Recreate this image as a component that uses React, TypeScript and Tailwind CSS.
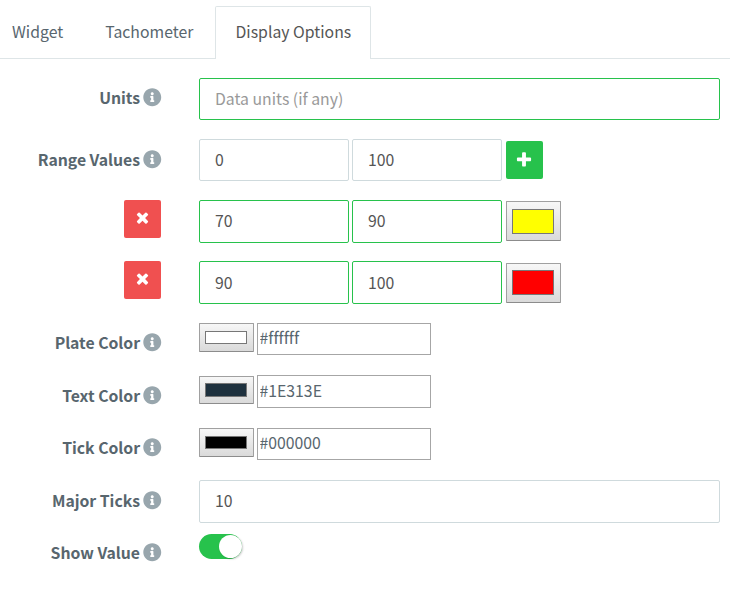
import type { ReactNode } from "react";
import { FaInfoCircle } from "react-icons/fa";

function InfoIcon() {
  return <FaInfoCircle className="size-[18.5px] shrink-0 text-[#98a6ad]" />;
}

function TimesIcon() {
  return (
    <svg className="mr-px mb-[3px] size-[17px] fill-white" viewBox="0 0 1792 1792">
      <path d="M1490 1322q0 40-28 68l-136 136q-28 28-68 28t-68-28l-294-294-294 294q-28 28-68 28t-68-28l-136-136q-28-28-28-68t28-68l294-294-294-294q-28-28-28-68t28-68l136-136q28-28 68-28t68 28l294 294 294-294q28-28 68-28t68 28l136 136q28 28 28 68t-28 68l-294 294 294 294q28 28 28 68z" />
    </svg>
  );
}

function PlusIcon() {
  return (
    <svg className="mr-[0.5px] size-[18px] fill-white" viewBox="0 0 1792 1792">
      <path d="M1600 736v192q0 40-28 68t-68 28h-416v416q0 40-28 68t-68 28h-192q-40 0-68-28t-28-68v-416h-416q-40 0-68-28t-28-68v-192q0-40 28-68t68-28h416v-416q0-40 28-68t68-28h192q40 0 68 28t28 68v416h416q40 0 68 28t28 68z" />
    </svg>
  );
}

function Label({ children }: { children: ReactNode }) {
  return (
    <div className="flex h-[21px] items-center justify-end gap-[3px] font-bold whitespace-nowrap">
      <span className="mt-px leading-[22px] tracking-[-0.03px]">{children}</span>
      <div className="-mr-[0.5px]">
        <InfoIcon />
      </div>
    </div>
  );
}

function Row({ className, label, children }: { className: string; label: ReactNode; children: ReactNode }) {
  return (
    <div className={`grid grid-cols-[161px_521px] items-start gap-x-[38px] ${className}`}>
      {label}
      <div className="flex items-start">{children}</div>
    </div>
  );
}

function RemoveButton() {
  return (
    <button type="button" className="flex h-[38px] w-[37px] items-center justify-center justify-self-end rounded-[2px] bg-[#f05050]">
      <TimesIcon />
    </button>
  );
}

const field = "rounded-[2px] border bg-white pl-[15px] text-[#555] outline-none placeholder:text-[#999] placeholder:opacity-100";

function ColorButton({ className, swatch }: { className: string; swatch: string }) {
  return (
    <button
      type="button"
      className={`w-[55px] rounded-[1px] border border-[#a0a0a0] border-b-[#8c8c8c] bg-linear-to-b from-[#f7f7f7] to-[#dadada] pr-[6px] pl-[5px] ${className}`}
    >
      <span className={`block h-full border border-[#777] ${swatch}`} />
    </button>
  );
}

const hex = "ml-[3px] w-[174px] border border-[#a6a6a6] pl-[1.5px] text-[#58666e] outline-none";

export default function App() {
  return (
    <div className="h-[596px] w-[730px] overflow-hidden bg-white font-['Noto_Sans_CJK_SC',sans-serif] text-[15.8px] text-[#58666e] [font-variant-ligatures:none]">
      <nav className="flex h-[59px] items-end leading-6">
        <div className="flex h-[59px] w-[215px] gap-[42px] border-b border-[#dee5e7] pt-5 pl-3">
          <a>Widget</a>
          <a>Tachometer</a>
        </div>
        <a className="h-[53px] w-[156px] rounded-t-[2px] border border-b-0 border-[#dee5e7] pt-[13px] pl-[19.5px] whitespace-nowrap text-[#555]">
          Display Options
        </a>
        <div className="h-[59px] flex-1 border-b border-[#dee5e7]" />
      </nav>

      <form className="flex flex-col">
        <Row className="mt-[19px] h-[61px]" label={<div className="pt-[9px]"><Label>Units</Label></div>}>
          <input className={`${field} h-[42px] w-full border-[#27c24c] pb-[2px]`} placeholder="Data units (if any)" />
        </Row>
        <Row className="h-[61px]" label={<div className="pt-[10px]"><Label>Range Values</Label></div>}>
          <input className={`${field} h-[42px] w-[150px] border-[#cfdadd] pb-[2px]`} defaultValue="0" />
          <input className={`${field} ml-[3px] h-[42px] w-[150px] border-[#cfdadd] pb-[2px]`} defaultValue="100" />
          <button type="button" className="mt-[2px] ml-1 flex h-[38px] w-[37px] items-center justify-center rounded-[2px] bg-[#27c24c]">
            <PlusIcon />
          </button>
        </Row>
        <Row className="h-[61px]" label={<RemoveButton />}>
          <input className={`${field} h-[43px] w-[150px] border-[#27c24c] pb-[2px]`} defaultValue="70" />
          <input className={`${field} ml-[3px] h-[43px] w-[150px] border-[#27c24c] pb-[2px]`} defaultValue="90" />
          <ColorButton className="mt-px ml-1 h-10 pt-[7px] pb-[6px]" swatch="bg-[#ffff00]" />
        </Row>
        <Row className="h-[62px]" label={<RemoveButton />}>
          <input className={`${field} h-[43px] w-[150px] border-[#27c24c]`} defaultValue="90" />
          <input className={`${field} ml-[3px] h-[43px] w-[150px] border-[#27c24c]`} defaultValue="100" />
          <ColorButton className="mt-[2px] ml-1 h-10 pt-[6px] pb-[7px]" swatch="bg-[#ff0000]" />
        </Row>
        <Row className="h-[52px]" label={<div className="pt-[9px]"><Label>Plate Color</Label></div>}>
          <ColorButton className="h-[29px] py-[7px]" swatch="bg-white" />
          <input className={`${hex} h-8 pb-[3px]`} defaultValue="#ffffff" />
        </Row>
        <Row className="h-[53px]" label={<div className="pt-[10px]"><Label>Text Color</Label></div>}>
          <ColorButton className="mt-px h-7 py-[6px]" swatch="bg-[#1e313e]" />
          <input className={`${hex} h-[33px] pb-[2px]`} defaultValue="#1E313E" />
        </Row>
        <Row className="h-[52px]" label={<div className="pt-[9px]"><Label>Tick Color</Label></div>}>
          <ColorButton className="h-[29px] py-[7px]" swatch="bg-black" />
          <input className={`${hex} h-8 pb-[3px]`} defaultValue="#000000" />
        </Row>
        <Row className="h-[54px]" label={<div className="pt-[10px]"><Label>Major Ticks</Label></div>}>
          <input className={`${field} h-[43px] w-full border-[#cfdadd] pb-[2px]`} defaultValue="10" />
        </Row>
        <Row className="h-[30px]" label={<div className="pt-[8px]"><Label>Show Value</Label></div>}>
          <div className="flex h-[25px] w-[43px] justify-end rounded-full bg-[#27c24c] p-px">
            <span className="-mr-[0.5px] size-[23px] rounded-full bg-white shadow-[1px_1px_2px_rgba(0,0,0,0.2)]" />
          </div>
        </Row>
      </form>
    </div>
  );
}
